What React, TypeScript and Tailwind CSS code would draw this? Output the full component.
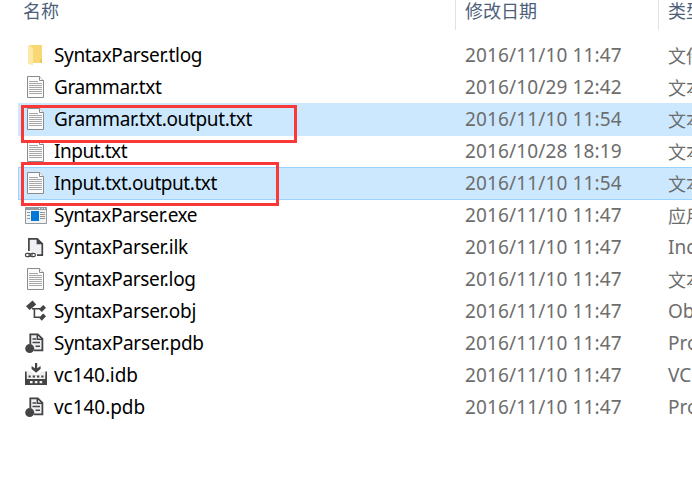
import type { ReactNode } from "react";

type Kind = "folder" | "text" | "exe" | "ilk" | "obj" | "pdb" | "idb";

interface FileRow {
  name: string;
  kind: Kind;
  date: string;
  type: string;
  cjk?: boolean;
  tracking: string;
  state?: "selected" | "focused";
}

const files: FileRow[] = [
  { name: "SyntaxParser.tlog", kind: "folder", date: "2016/11/10 11:47", type: "文件夹", cjk: true, tracking: "tracking-[-0.35px]" },
  { name: "Grammar.txt", kind: "text", date: "2016/10/29 12:42", type: "文本文档", cjk: true, tracking: "tracking-[-0.4px]" },
  { name: "Grammar.txt.output.txt", kind: "text", date: "2016/11/10 11:54", type: "文本文档", cjk: true, tracking: "tracking-[-0.37px]", state: "selected" },
  { name: "Input.txt", kind: "text", date: "2016/10/28 18:19", type: "文本文档", cjk: true, tracking: "tracking-[-0.48px]" },
  { name: "Input.txt.output.txt", kind: "text", date: "2016/11/10 11:54", type: "文本文档", cjk: true, tracking: "tracking-[-0.44px]", state: "focused" },
  { name: "SyntaxParser.exe", kind: "exe", date: "2016/11/10 11:47", type: "应用程序", cjk: true, tracking: "tracking-[-0.42px]" },
  { name: "SyntaxParser.ilk", kind: "ilk", date: "2016/11/10 11:47", type: "Incremental Linker File", tracking: "tracking-[-0.33px]" },
  { name: "SyntaxParser.log", kind: "text", date: "2016/11/10 11:47", type: "文本文档", cjk: true, tracking: "tracking-[-0.35px]" },
  { name: "SyntaxParser.obj", kind: "obj", date: "2016/11/10 11:47", type: "Object File", tracking: "tracking-[-0.33px]" },
  { name: "SyntaxParser.pdb", kind: "pdb", date: "2016/11/10 11:47", type: "Program Debug Database", tracking: "tracking-[-0.28px]" },
  { name: "vc140.idb", kind: "idb", date: "2016/11/10 11:47", type: "VC++ Minimum Rebuild", tracking: "tracking-[-0.1px]" },
  { name: "vc140.pdb", kind: "pdb", date: "2016/11/10 11:47", type: "Program Debug Database", tracking: "tracking-[-0.05px]" },
];

const drawings: Record<Kind, ReactNode> = {
  folder: (
    <>
      <path d="M6 2h12v18H8z" fill="#f8d775" />
      <path d="M16.5 16h1.5v4h-1.5z" fill="#e8c05a" />
      <path d="M4 2h1l4 3.5V22.5L4 20.5z" fill="#fde8a5" />
    </>
  ),
  text: (
    <>
      <path d="M3.5 1.5h12l4 4v17h-16z" fill="#fbfbfb" stroke="#8a8c8c" />
      <path d="M15.5 1.5v4h4" fill="#fff" stroke="#8a8c8c" />
      <path d="M5 6.5h9M5 8.5h13M5 10.5h13M5 12.5h13M5 14.5h13M5 16.5h13M5 18.5h13" stroke="#a8a8a8" />
    </>
  ),
  exe: (
    <>
      <path d="M1.5 4.5h21v16h-21z" fill="#f3f3f3" stroke="#949ba0" />
      <path d="M1 4h22v3H1z" fill="#949ba0" />
      <path d="M15 5.5h1M17.5 5.5h1M20 5.5h1" stroke="#fff" />
      <path d="M7 8h8v10H7z" fill="#0078d7" />
      <path d="M3 9.5h3M3 12.5h3M3 15.5h3M16 9.5h5M16 11.5h5M16 13.5h5M16 15.5h5" stroke="#8e969b" />
    </>
  ),
  ilk: (
    <>
      <path d="M5 4h9l4 4v12H5z" fill="#f0f0f4" />
      <path d="M4.9 16V3.9h8.3l5.1 5v11.3H13" fill="none" stroke="#444" strokeWidth="1.7" />
      <path d="M12.6 3.2v6H19z" fill="#444" />
      <path d="M1 17h11v6H1z" fill="#fff" />
      <rect x="1.4" y="18.4" width="5" height="3.2" rx="1.6" fill="none" stroke="#444" strokeWidth="1.2" />
      <rect x="6.4" y="18.4" width="5" height="3.2" rx="1.6" fill="none" stroke="#444" strokeWidth="1.2" />
      <path d="M4 20h5" stroke="#444" strokeWidth="1.1" />
    </>
  ),
  obj: (
    <g fill="#444">
      <path d="M8.6 1.6l3.6 3.8L5.6 11 2 7.2z" />
      <path d="M8 9.8h8M10.4 9.8v8.4H16" fill="none" stroke="#444" strokeWidth="1.6" />
      <path d="M19.2 6l2.8 2.8-4.2 4.2-2.8-2.8zM19.2 14.4l2.8 2.8-4.2 4.6-2.8-3z" />
    </g>
  ),
  pdb: (
    <>
      <path d="M5.5 2.5h8.7L19 7.3V20H5.5z" fill="#f0f0f4" />
      <path d="M6.3 13V3.3h7.5l4.6 4.6v11.5H10" fill="none" stroke="#444" strokeWidth="1.8" />
      <path d="M13.3 3V8.3h5" fill="none" stroke="#444" strokeWidth="1.5" />
      <path d="M8.5 8h3.5M8.5 11.5h7.5M11.5 15.3h4.5" stroke="#444" strokeWidth="1.5" />
      <circle cx="5.7" cy="17.6" r="4.5" fill="#444" />
    </>
  ),
  idb: (
    <>
      <path d="M11 0h2.2v5.2L16.6 3v2.9L12.1 9.8 7.6 5.9V3L11 5.2z" fill="#444" />
      <path d="M1 8.5h1.8v4h18.4v-4H23V22H1z" fill="#444" />
      <path d="M2.8 8.5h3.7l5.6 4.3 5.6-4.3h3.5V16H2.8z" fill="#f0f0f0" />
      <path d="M4.5 12.5h2.2v2H4.5zM8.7 12.5H11v2H8.7zM13 12.5h2.3v2H13zM17.3 12.5h2.2v2h-2.2z" fill="#444" />
      <path d="M6 18h2.6v2.2H6zM10.8 18h2.6v2.2h-2.6zM15.6 18h2.6v2.2h-2.6z" fill="#f5f5f5" />
    </>
  ),
};

function FileIcon({ kind }: { kind: Kind }) {
  return (
    <svg className="-mt-px mr-[6px] block h-6 w-6 shrink-0" viewBox="0 0 24 24">
      {drawings[kind]}
    </svg>
  );
}

function Row({ file }: { file: FileRow }) {
  const tone =
    file.state === "selected"
      ? "bg-[#cce8ff]"
      : file.state === "focused"
        ? "border-y border-l border-[#99d1ff] bg-[#cce8ff]"
        : "";
  return (
    <div className={`-mb-px ml-[18px] flex h-[33px] ${tone}`}>
      <div className={`flex w-[447px] shrink-0 items-center text-black ${file.state === "focused" ? "-mr-px pl-[5px]" : "pl-[6px]"}`}>
        <FileIcon kind={file.kind} />
        <span className={file.tracking}>{file.name}</span>
      </div>
      <div className="flex w-[203px] shrink-0 items-center tracking-[0.13px] text-[#6d6d6d]">{file.date}</div>
      <div className={`flex shrink-0 items-center text-[#6d6d6d] ${file.cjk ? "text-[18px]" : ""}`}>{file.type}</div>
    </div>
  );
}

export default function App() {
  return (
    <main className="relative h-[495px] w-[692px] overflow-hidden bg-white font-['Noto_Sans','Noto_Sans_CJK_SC',sans-serif] text-[19px] leading-none whitespace-nowrap">
      <header className="flex h-[39px] text-[18px] text-[#4c607a]">
        <div className="w-[455px] shrink-0 pt-[2px] pl-[23px]">名称</div>
        <div className="h-[30px] w-[203px] shrink-0 border-l border-[#e2e2e2] pt-[2px] pl-[9px]">修改日期</div>
        <div className="h-[30px] shrink-0 border-l border-[#e2e2e2] pt-[2px] pl-[9px]">类型</div>
      </header>
      {files.map((file) => (
        <Row key={file.name} file={file} />
      ))}
      <div className="absolute top-[105px] left-[21px] h-[38px] w-[276px] border-3 border-[#fa3838]" />
      <div className="absolute top-[162px] left-[21px] h-[44px] w-[258px] border-3 border-[#fa3838]" />
    </main>
  );
}
